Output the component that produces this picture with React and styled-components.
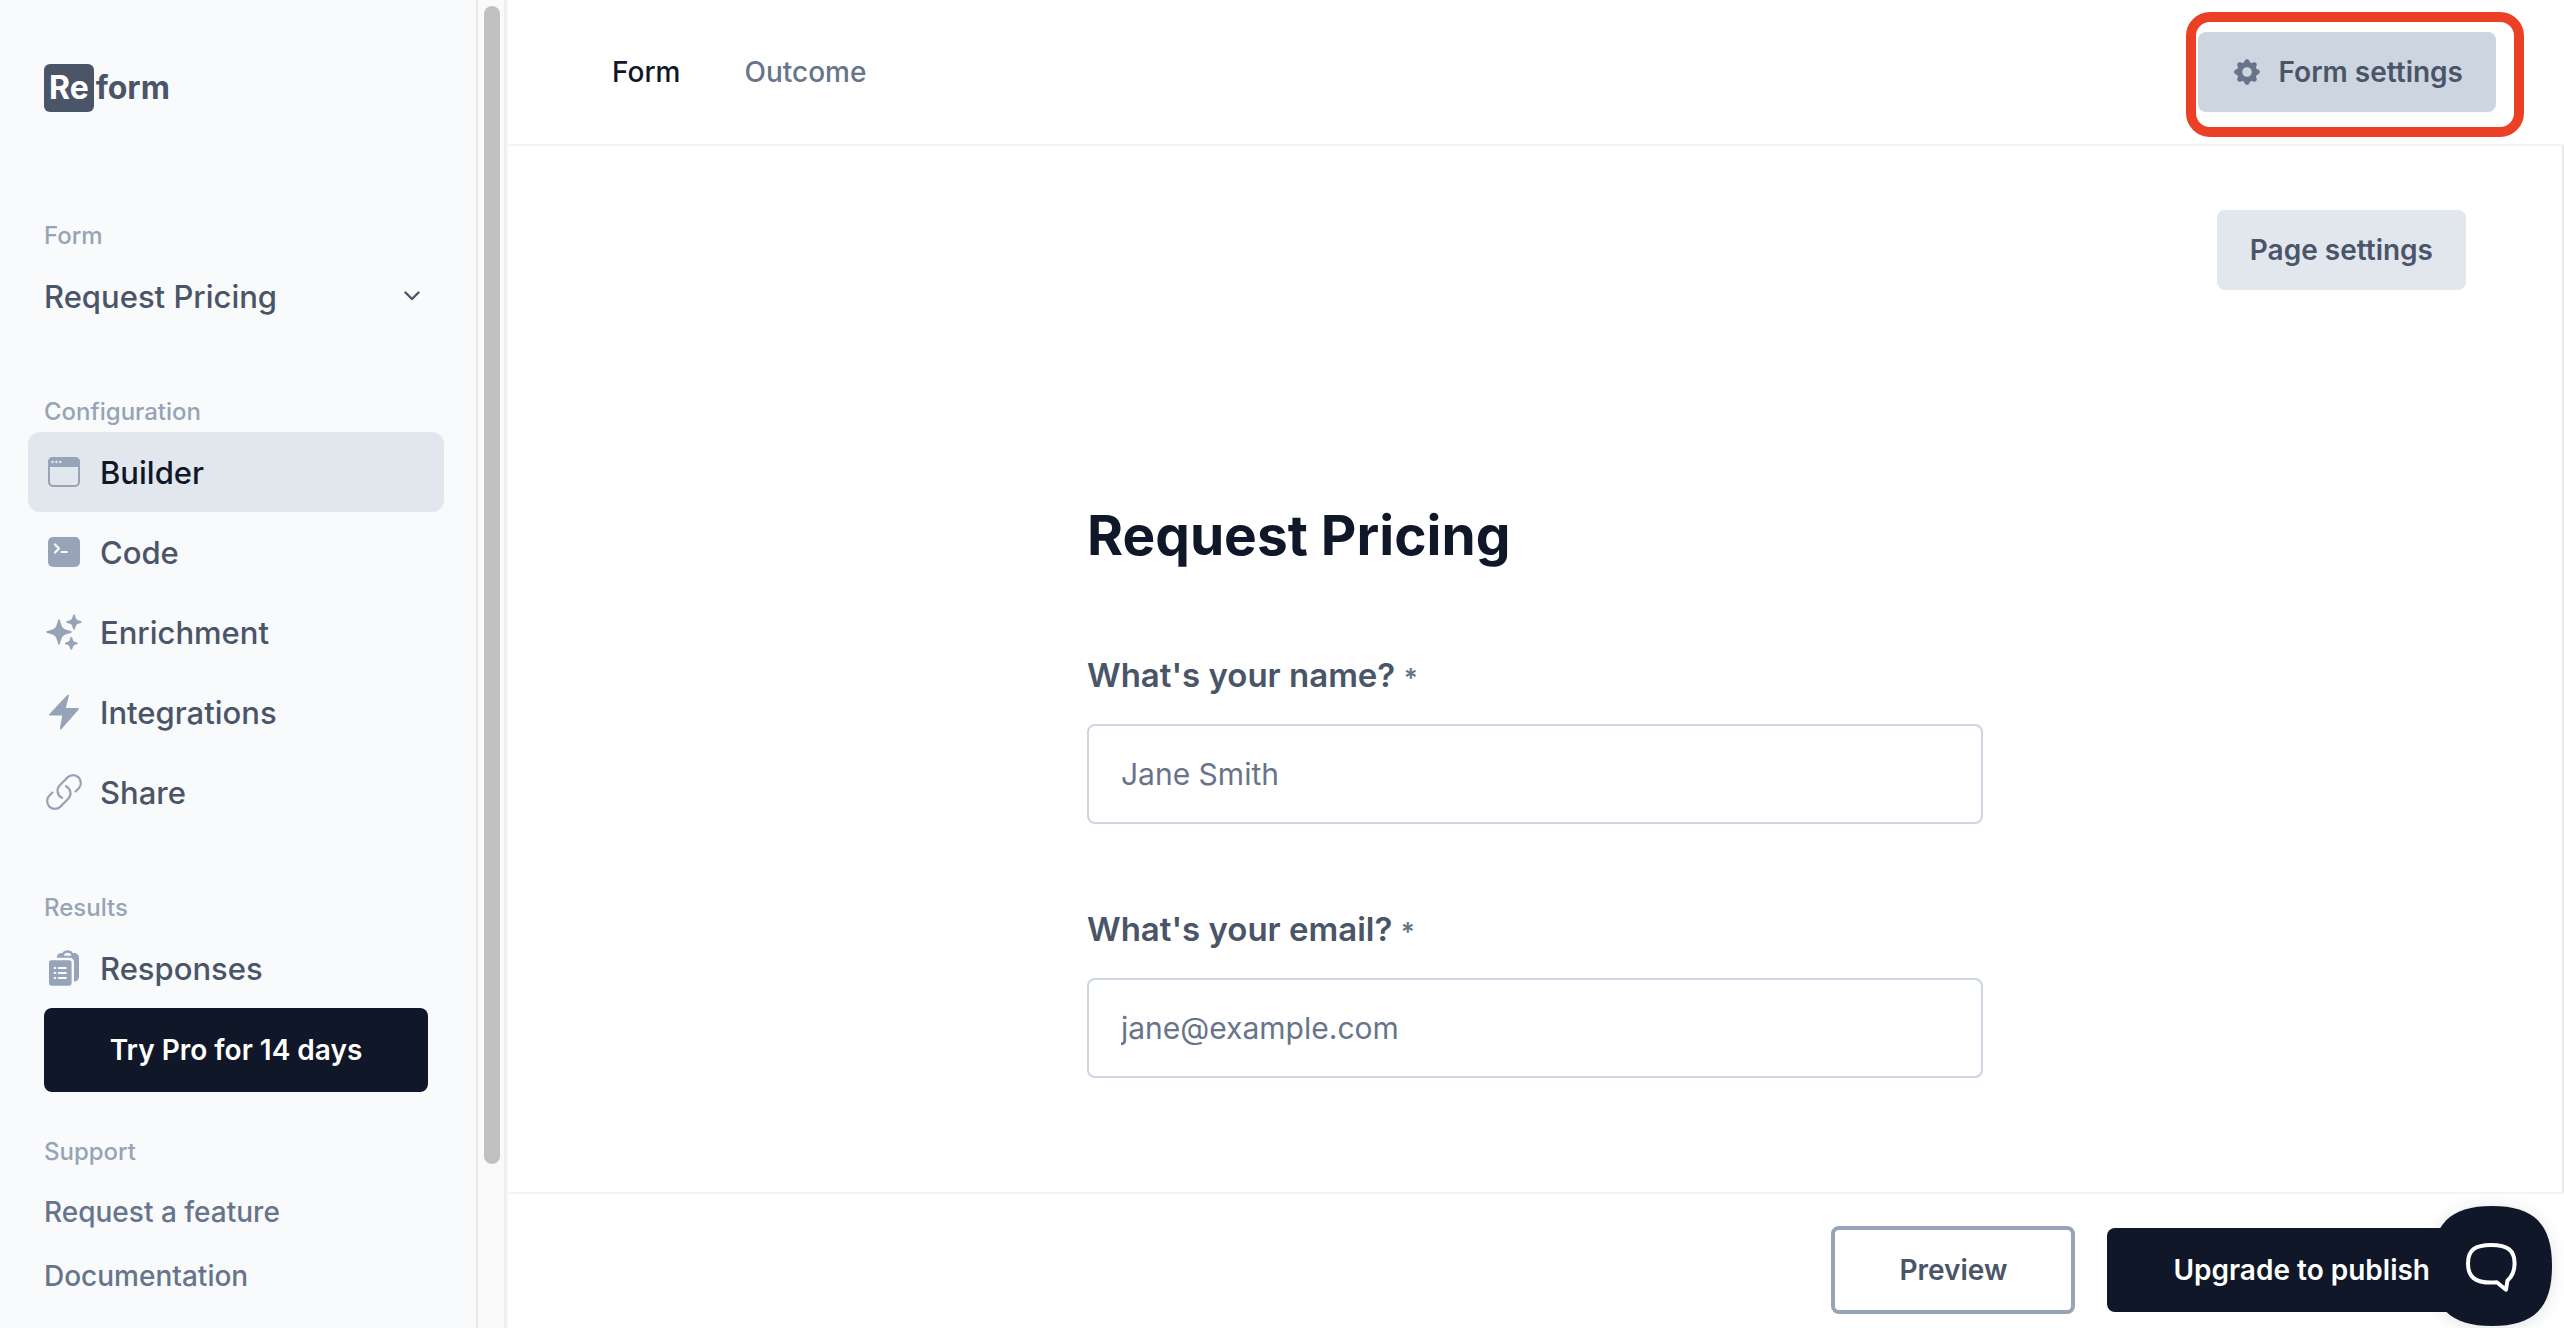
import React from "react";
import styled, { createGlobalStyle, css } from "styled-components";
import { HiCog } from "react-icons/hi";

const c = {
  ink: "#101728",
  text: "#4a5568",
  muted: "#67748a",
  soft: "#97a3b6",
  line: "#cdd5e0",
  fill: "#e2e7ee",
  hair: "#f1f5f9",
  panel: "#f9fafc",
};

const GlobalStyle = createGlobalStyle`
  *, *::before, *::after { box-sizing: border-box; }
  body { margin: 0; background: #fff; }
  body, button, input { font-family: Inter, "Liberation Sans", sans-serif; }
`;

const Shell = styled.div`
  display: flex;
  height: 100vh;
  overflow: hidden;
  color: ${c.text};
`;

const Sidebar = styled.aside`
  display: flex;
  flex: none;
  width: 508px;
  background: ${c.panel};
  border-right: 2px solid ${c.hair};
`;

const SidebarContent = styled.div`
  display: flex;
  flex: 1;
  flex-direction: column;
  min-width: 0;
`;

const SidebarScroll = styled.div`
  flex: 1;
  min-height: 0;
  overflow: hidden;
  padding: 64px 32px 0 28px;
`;

const ScrollTrack = styled.div`
  flex: none;
  width: 30px;
  padding: 6px;
  background: #fafafa;
  border-left: 2px solid #e8e8e8;
  border-right: 2px solid #ededed;
`;

const ScrollThumb = styled.div`
  width: 16px;
  height: 88%;
  border-radius: 8px;
  background: #c1c1c1;
`;

const Logo = styled.a`
  display: flex;
  align-items: center;
  gap: 2px;
  width: max-content;
  margin: 0 0 104px 16px;
  color: ${c.text};
  font-size: 32px;
  font-weight: 700;
  line-height: 48px;
  text-decoration: none;
`;

const LogoMark = styled.span`
  padding: 0 5px;
  border-radius: 6px;
  background: ${c.text};
  color: #fff;
`;

const Section = styled.section`
  & + & { margin-top: 56px; }
`;

const SectionLabel = styled.h2`
  margin: 0;
  padding-left: 16px;
  color: ${c.soft};
  font-size: 24px;
  font-weight: 500;
  line-height: 40px;
`;

const FormPicker = styled.button`
  display: flex;
  align-items: center;
  justify-content: space-between;
  width: 100%;
  height: 80px;
  padding: 0 24px 0 16px;
  border: 0;
  background: none;
  color: ${c.text};
  font-size: 31px;
  font-weight: 500;
`;

const NavItem = styled.a`
  display: flex;
  align-items: center;
  gap: 18px;
  height: 80px;
  padding: 0 18px;
  border-radius: 12px;
  color: ${c.text};
  font-size: 31px;
  font-weight: 500;
  text-decoration: none;
  svg { flex: none; color: ${c.soft}; }
  ${(p) => p.$active && css`
    background: ${c.fill};
    color: ${c.ink};
  `}
`;

const SidebarFooter = styled.div`
  flex: none;
  padding: 0 48px 20px 44px;
`;

const Button = styled.button`
  display: flex;
  align-items: center;
  justify-content: center;
  gap: 16px;
  height: ${(p) => (p.$large ? 84 : 80)}px;
  padding: 0 ${(p) => (p.$large ? 66 : 33)}px;
  border: 0;
  border-radius: 8px;
  background: ${c.fill};
  color: ${c.text};
  font-size: 28px;
  font-weight: 600;
  white-space: nowrap;
  svg { flex: none; color: ${c.muted}; }
  ${(p) => p.$tone === "dark" && css`
    background: ${c.ink};
    color: #fff;
  `}
  ${(p) => p.$tone === "pressed" && css`
    background: ${c.line};
  `}
  ${(p) => p.$tone === "outline" && css`
    height: 88px;
    padding: 0 64px;
    border: 4px solid ${c.soft};
    background: #fff;
  `}
  ${(p) => p.$block && css`
    width: 100%;
    padding: 0;
  `}
`;

const Support = styled.div`
  margin: 40px -16px 0;
`;

const SupportLinks = styled.nav`
  display: flex;
  flex-direction: column;
  padding: 8px 16px 0;
`;

const SupportLink = styled.a`
  color: ${c.muted};
  font-size: 28px;
  font-weight: 500;
  line-height: 64px;
  text-decoration: none;
`;

const Main = styled.main`
  display: flex;
  flex: 1;
  flex-direction: column;
  min-width: 0;
  background: #fff;
`;

const TopBar = styled.header`
  display: flex;
  flex: none;
  align-items: center;
  justify-content: space-between;
  height: 146px;
  padding: 0 68px 0 104px;
  border-bottom: 2px solid ${c.hair};
`;

const Tabs = styled.nav`
  display: flex;
  gap: 64px;
`;

const Tab = styled.a`
  color: ${(p) => (p.$active ? c.ink : c.muted)};
  font-size: 28px;
  font-weight: 500;
  text-decoration: none;
`;

const Highlighted = styled.div`
  position: relative;
  &::after {
    content: "";
    position: absolute;
    inset: -20px -28px -25px -12px;
    border: 10px solid #ec4026;
    border-radius: 24px;
    pointer-events: none;
  }
`;

const Canvas = styled.div`
  display: flex;
  flex: 1;
  flex-direction: column;
  min-height: 0;
  overflow: hidden;
  padding-top: 64px;
  border-right: 2px solid #e8e8e8;
`;

const CanvasTools = styled.div`
  display: flex;
  justify-content: flex-end;
  padding-right: 96px;
`;

const Form = styled.form`
  display: flex;
  flex-direction: column;
  gap: 80px;
  width: 100%;
  max-width: 896px;
  margin: 210px auto 0;
`;

const Title = styled.h1`
  margin: 0;
  color: ${c.ink};
  font-size: 55px;
  font-weight: 700;
  line-height: 70px;
`;

const Field = styled.div`
  display: flex;
  flex-direction: column;
  gap: 24px;
`;

const FieldLabel = styled.label`
  font-size: 33px;
  font-weight: 600;
  line-height: 50px;
`;

const Required = styled.span`
  color: ${c.muted};
  font-size: 26px;
  line-height: 1;
`;

const TextInput = styled.input`
  width: 100%;
  height: 100px;
  padding: 0 32px;
  border: 2px solid ${c.line};
  border-radius: 8px;
  background: #fff;
  color: ${c.ink};
  font-size: 30px;
  &::placeholder { color: ${c.muted}; opacity: 1; }
`;

const BottomBar = styled.footer`
  display: flex;
  flex: none;
  align-items: center;
  justify-content: flex-end;
  gap: 32px;
  height: 136px;
  padding: 20px 68px 2px;
  border-top: 2px solid ${c.hair};
`;

const ChatButton = styled.button`
  position: fixed;
  right: 12px;
  bottom: 2px;
  width: 120px;
  height: 120px;
  padding: 0;
  border: 0;
  background: none;
  filter: drop-shadow(0 2px 8px rgba(15, 23, 42, 0.12));
  svg { display: block; }
`;

const Icon = ({ size = 36, box = "0 0 36 36", children }) => (
  <svg width={size} height={size} viewBox={box} fill="currentColor" aria-hidden="true">
    {children}
  </svg>
);

const WindowIcon = () => (
  <Icon>
    <rect x="3" y="4" width="30" height="28" rx="4" fill="none" stroke="currentColor" strokeWidth="2" />
    <path d="M2 13V8a5 5 0 0 1 5-5h22a5 5 0 0 1 5 5v5z" />
    <g fill={c.fill}>
      <circle cx="6.5" cy="8" r="1.3" />
      <circle cx="10.4" cy="8" r="1.3" />
      <circle cx="14.3" cy="8" r="1.3" />
    </g>
  </Icon>
);

const TerminalIcon = () => (
  <Icon>
    <rect x="2" y="3" width="32" height="30" rx="5" />
    <path
      d="M9 10.4l4 4.1-4 4.1M15.6 18h5.2"
      fill="none"
      stroke={c.panel}
      strokeWidth="2.2"
      strokeLinecap="round"
      strokeLinejoin="round"
    />
  </Icon>
);

const star = (x, y, r) => {
  const k = r * 0.3;
  const j = r * 0.38;
  return `M${x} ${y - r}Q${x + k / 2} ${y - j} ${x + k} ${y - k}Q${x + j} ${y - k / 2} ${x + r} ${y}Q${x + j} ${y + k / 2} ${x + k} ${y + k}Q${x + k / 2} ${y + j} ${x} ${y + r}Q${x - k / 2} ${y + j} ${x - k} ${y + k}Q${x - j} ${y + k / 2} ${x - r} ${y}Q${x - j} ${y - k / 2} ${x - k} ${y - k}Q${x - k / 2} ${y - j} ${x} ${y - r}z`;
};

const SparklesIcon = () => (
  <Icon>
    <path
      d={star(13, 18, 11.6) + star(28, 8, 6.6) + star(25.3, 29.4, 5.4)}
      stroke="currentColor"
      strokeWidth="2"
      strokeLinejoin="round"
    />
  </Icon>
);

const BoltIcon = () => (
  <Icon>
    <path
      d="M22 1.6L18.6 15H32L14.7 34.6L17.4 20.6H4z"
      stroke="currentColor"
      strokeWidth="1.8"
      strokeLinejoin="round"
    />
  </Icon>
);

const LinkIcon = () => (
  <Icon box="1.6 1.6 20.8 20.8">
    <path
      d="M13.19 8.688a4.5 4.5 0 0 1 1.242 7.244l-4.5 4.5a4.5 4.5 0 0 1-6.364-6.364l1.757-1.757m13.35-.622 1.757-1.757a4.5 4.5 0 0 0-6.364-6.364l-4.5 4.5a4.5 4.5 0 0 0 1.242 7.244"
      fill="none"
      stroke="currentColor"
      strokeWidth="1.3"
      strokeLinecap="round"
      strokeLinejoin="round"
    />
  </Icon>
);

const ClipboardIcon = () => (
  <Icon>
    <path
      fillRule="evenodd"
      d="M10.6 7.7C11 5 12.6 3 15.6 3h1C17.2 1.2 19 .2 21.6.2S26 1.2 26.7 3H28c3 0 5 2 5 5v18.5c0 3-2 5-5 5V12c0-2.6-1.8-4.3-4.300-4.300zM18 5.700h7.300c0-1.800-1.500-3-3.700-3S18 3.900 18 5.700z"
    />
    <rect x="3" y="10.3" width="22.6" height="25.4" rx="2.6" />
    <path d="M8.600 18h.800M12.800 18h7M8.600 23h.800M12.800 23h7M8.600 28h.800M12.800 28h7" stroke={c.panel} strokeWidth="2" strokeLinecap="round" />
  </Icon>
);

const ChevronIcon = () => (
  <Icon size={16} box="0 0 16 16">
    <path d="M1.5 4.5L8 11l6.5-6.5" fill="none" stroke="currentColor" strokeWidth="2.4" strokeLinecap="round" strokeLinejoin="round" />
  </Icon>
);

const ChatIcon = () => (
  <svg width="120" height="120" viewBox="0 0 120 120" aria-hidden="true">
    <path d="M60 0C102 0 120 18 120 60s-18 60-60 60S0 102 0 60 18 0 60 0z" fill={c.ink} />
    <path
      d="M59.200 39C76 39 82.600 44.500 82.600 57.500c0 7.500-2.400 13-7.200 17.200l-1.400 9-9.200-7.400c-1.800.2-3.600.3-5.600.3C43 76.600 36 71 36 57.500S43 39 59.200 39z"
      fill="none"
      stroke="#fff"
      strokeWidth="4"
      strokeLinejoin="round"
    />
  </svg>
);

const CONFIG_ITEMS = [
  { label: "Builder", icon: WindowIcon, active: true },
  { label: "Code", icon: TerminalIcon },
  { label: "Enrichment", icon: SparklesIcon },
  { label: "Integrations", icon: BoltIcon },
  { label: "Share", icon: LinkIcon },
];

const RESULT_ITEMS = [{ label: "Responses", icon: ClipboardIcon }];

const FIELDS = [
  { id: "name", type: "text", label: "What's your name?", placeholder: "Jane Smith" },
  { id: "email", type: "email", label: "What's your email?", placeholder: "jane@example.com" },
];

const NavSection = ({ title, items }) => (
  <Section>
    <SectionLabel>{title}</SectionLabel>
    <nav>
      {items.map(({ label, icon: Glyph, active }) => (
        <NavItem key={label} href="#" $active={active}>
          <Glyph />
          {label}
        </NavItem>
      ))}
    </nav>
  </Section>
);

export default function App() {
  return (
    <>
      <GlobalStyle />
      <Shell>
        <Sidebar>
          <SidebarContent>
            <SidebarScroll>
              <Logo href="#">
                <LogoMark>Re</LogoMark>
                <span>form</span>
              </Logo>
              <Section>
                <SectionLabel>Form</SectionLabel>
                <FormPicker type="button">
                  Request Pricing
                  <ChevronIcon />
                </FormPicker>
              </Section>
              <NavSection title="Configuration" items={CONFIG_ITEMS} />
              <NavSection title="Results" items={RESULT_ITEMS} />
            </SidebarScroll>
            <SidebarFooter>
              <Button type="button" $large $block $tone="dark">Try Pro for 14 days</Button>
              <Support>
                <SectionLabel>Support</SectionLabel>
                <SupportLinks>
                  <SupportLink href="#">Request a feature</SupportLink>
                  <SupportLink href="#">Documentation</SupportLink>
                </SupportLinks>
              </Support>
            </SidebarFooter>
          </SidebarContent>
          <ScrollTrack>
            <ScrollThumb />
          </ScrollTrack>
        </Sidebar>
        <Main>
          <TopBar>
            <Tabs>
              <Tab href="#" $active>Form</Tab>
              <Tab href="#">Outcome</Tab>
            </Tabs>
            <Highlighted>
              <Button type="button" $tone="pressed">
                <HiCog size={32} aria-hidden="true" />
                Form settings
              </Button>
            </Highlighted>
          </TopBar>
          <Canvas>
            <CanvasTools>
              <Button type="button">Page settings</Button>
            </CanvasTools>
            <Form>
              <Title>Request Pricing</Title>
              {FIELDS.map(({ id, type, label, placeholder }) => (
                <Field key={id}>
                  <FieldLabel htmlFor={id}>
                    {label} <Required>*</Required>
                  </FieldLabel>
                  <TextInput id={id} type={type} placeholder={placeholder} />
                </Field>
              ))}
            </Form>
          </Canvas>
          <BottomBar>
            <Button type="button" $tone="outline">Preview</Button>
            <Button type="button" $large $tone="dark">Upgrade to publish</Button>
          </BottomBar>
        </Main>
        <ChatButton type="button" aria-label="Open chat">
          <ChatIcon />
        </ChatButton>
      </Shell>
    </>
  );
}
